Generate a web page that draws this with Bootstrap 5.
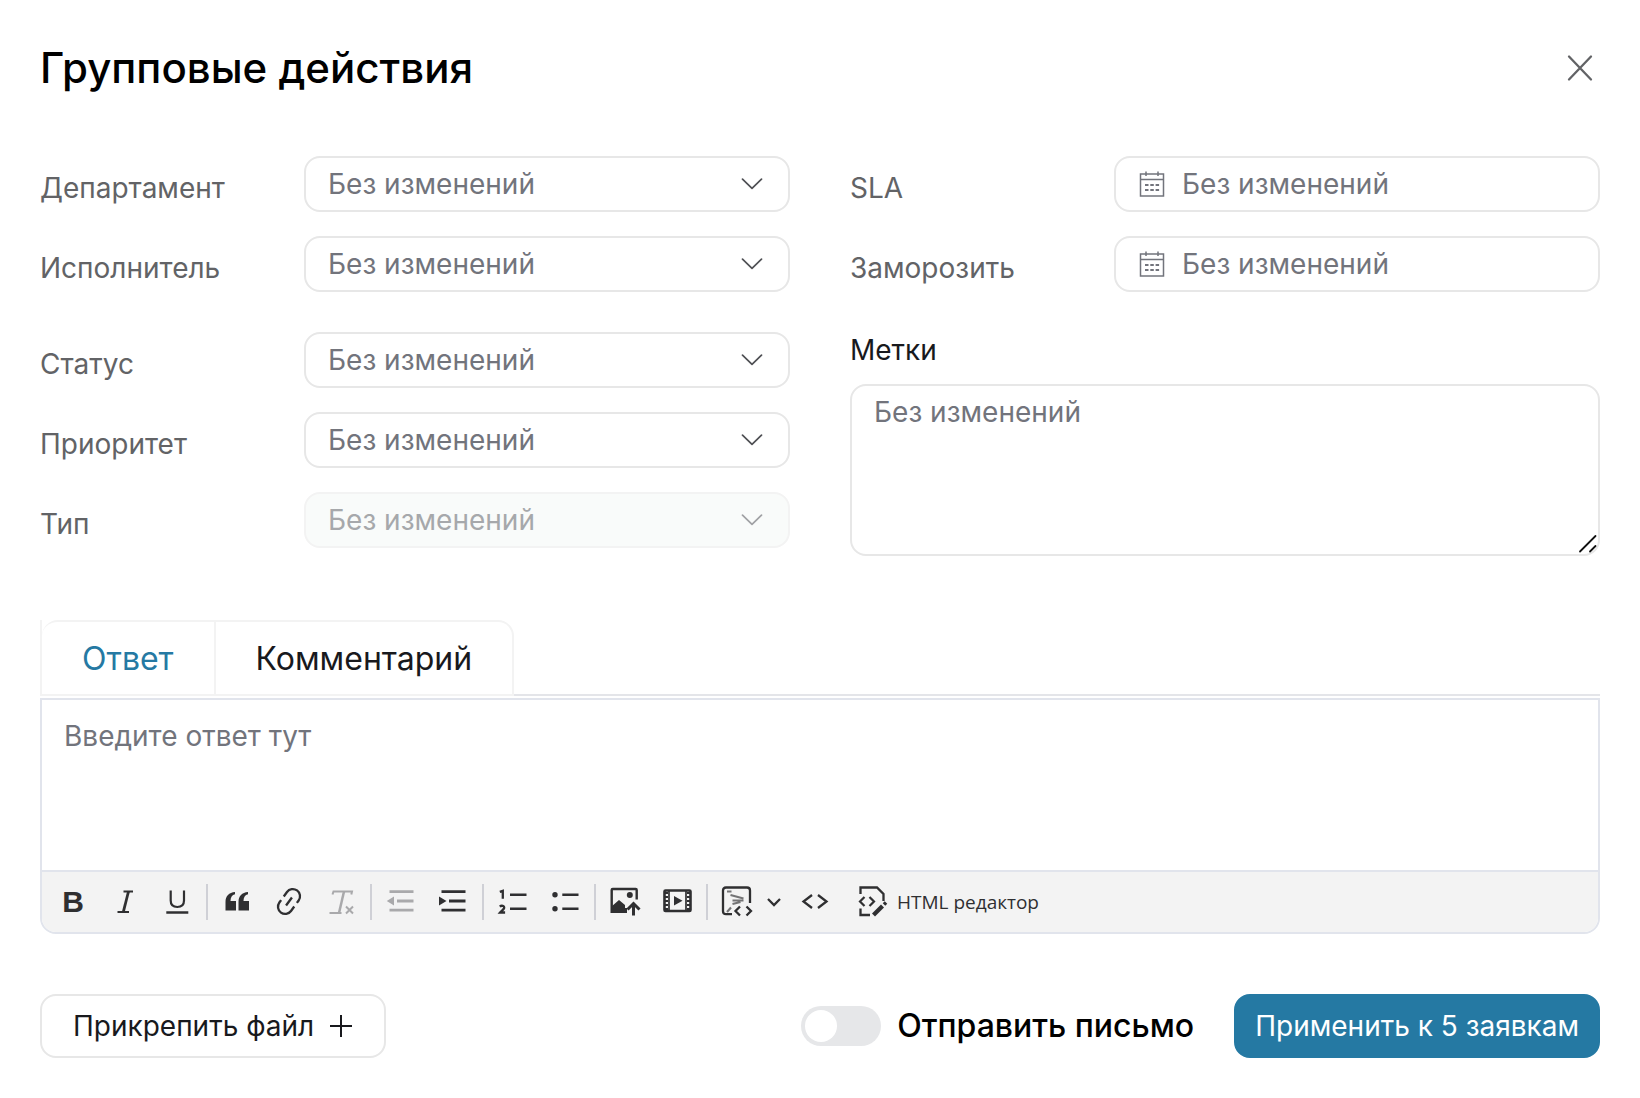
<!DOCTYPE html>
<html lang="ru">
<head>
<meta charset="utf-8">
<meta name="viewport" content="width=device-width, initial-scale=1">
<title>Групповые действия</title>
<link href="https://cdn.jsdelivr.net/npm/bootstrap@5.3.0/dist/css/bootstrap.min.css" rel="stylesheet">
<style>
  :root { --line: #e7e7e7; --line-soft: #f3f3f3; --line-cool: #e1e4ec; --muted: #72747c; --label: #626366; --ink: #18191d; --brand: #2579a3; }
  body { font-family: Inter, "Noto Sans", sans-serif; font-size: 28px; line-height: 36px; color: var(--ink); background: #fff; }
  .dialog-page { padding: 40px; }
  .dialog-head { margin-bottom: 60px; }
  .dialog-title { font-size: 42px; line-height: 56px; font-weight: 500; color: #000; }
  .close-btn { width: 40px; height: 40px; color: var(--label); }
  .fields-row { --bs-gutter-x: 60px; margin-bottom: 64px; }
  .field-stack { display: flex; flex-direction: column; gap: 24px; }
  .field-stack + .field-stack { margin-top: 40px; }
  .field-line { display: flex; align-items: center; }
  .field-line > label { flex: 0 0 264px; padding-top: 8px; color: var(--label); }
  .form-select, .form-control { border: 2px solid var(--line); border-radius: 16px; color: var(--muted); font-size: 28px; line-height: 36px; }
  .form-control::placeholder { color: var(--muted); opacity: 1; }
  .form-select { height: 56px; padding: 0 60px 0 22px; background-size: 22px 12px; background-position: right 25px center;
    background-image: url("data:image/svg+xml,%3Csvg xmlns='http://www.w3.org/2000/svg' viewBox='0 0 22 12'%3E%3Cpath d='M1.5 1.2 11 10.3 20.500 1.200' fill='none' stroke='%23505155' stroke-width='1.700' stroke-linecap='round' stroke-linejoin='round'/%3E%3C/svg%3E"); }
  .form-select:disabled { background-color: #f9fbfa; border-color: var(--line-soft); color: #a6a8ab; opacity: 1;
    background-image: url("data:image/svg+xml,%3Csvg xmlns='http://www.w3.org/2000/svg' viewBox='0 0 22 12'%3E%3Cpath d='M1.5 1.2 11 10.3 20.500 1.200' fill='none' stroke='%23a0a1a4' stroke-width='1.700' stroke-linecap='round' stroke-linejoin='round'/%3E%3C/svg%3E"); }
  .date-field { height: 56px; border: 2px solid var(--line); border-radius: 16px; padding: 0 20px 0 23px; gap: 17px; color: var(--muted); }
  .date-field .form-control { border: 0; padding: 0; border-radius: 0; }
  .tags-label { margin-bottom: 16px; }
  .tags-box { height: 172px; padding: 8px 22px; resize: none; display: block; }
  .grip { right: 2px; bottom: 2px; }
  .tabs-bar { border-bottom: 2px solid #e4e5e9; margin-bottom: 2px; }
  .tabs-set { border-left: 2px solid var(--line-soft); margin-bottom: -2px; }
  .tab-btn { height: 76px; padding: 2px 40px 0; font-size: 32px; background: #fff; color: var(--ink); border: 2px solid var(--line-soft); border-left: 0; }
  .tab-btn.active { color: var(--brand); border-top-left-radius: 16px; }
  .tab-btn:last-child { border-top-right-radius: 16px; }
  .editor { border: 2px solid var(--line-cool); border-radius: 0 0 16px 16px; overflow: hidden; margin-bottom: 60px; }
  .editor-text { height: 170px; padding: 18px 22px; border: 0; border-radius: 0; resize: none; display: block; }
  .editor-bar { height: 62px; padding-left: 5px; background: #f3f3f3; border-top: 2px solid var(--line-cool); color: #2f2f31; }
  .tool { width: 52px; height: 52px; padding: 0; border: 0; background: none; color: inherit; display: flex; align-items: center; justify-content: center; flex: none; }
  .tool:disabled { color: #a9a9ab; }
  .tool svg, .close-btn svg { fill: none; stroke: currentColor; }
  .tool .solid { fill: currentColor; stroke: none; }
  .tool-bold { font-family: "Liberation Sans", sans-serif; font-size: 30px; font-weight: 700; }
  .tool-narrow { width: 22px; margin-right: 4px; }
  .tool-wide { width: auto; margin-left: 16px; gap: 8px; font-family: "Open Sans", "Noto Sans", sans-serif; font-size: 19px; }
  .tool-sep { width: 2px; height: 36px; margin: 0 3px; background: #cfd0d6; flex: none; }
  .btn-attach, .btn-apply { height: 64px; border-radius: 16px; font-size: 28px; line-height: 36px; padding: 0 19px; }
  .btn-attach { border: 2px solid var(--line); color: var(--ink); padding: 0 31px; gap: 15px; }
  .btn-apply { background: var(--brand); border: 2px solid var(--brand); color: #fff; }
  .foot-end { gap: 40px; }
  .mail-switch { gap: 16px; font-size: 32px; font-weight: 500; color: #000; }
  .mail-switch .form-check-input { width: 80px; height: 40px; margin: 0; float: none; border: 0; background-color: #e6e7e9; background-size: 40px 40px;
    background-image: url("data:image/svg+xml,%3Csvg xmlns='http://www.w3.org/2000/svg' viewBox='0 0 40 40'%3E%3Ccircle cx='20' cy='20' r='16' fill='%23fff'/%3E%3C/svg%3E"); }
</style>
<script src="https://cdn.jsdelivr.net/npm/bootstrap@5.3.0/dist/js/bootstrap.bundle.min.js"></script>
</head>
<body>
<svg class="d-none" aria-hidden="true">
  <symbol id="calendar" viewBox="0 0 26 26">
    <path d="M1.500 3h23v22h-23zM1.500 8.500h23M7 .5v4.500M19 .5v4.500" fill="none" stroke="currentColor" stroke-width="1.500"/>
    <path d="M6 14h3.500M11.300 14h3.500M16.600 14h3.500M6 19h3.500M11.300 19h3.500M16.600 19h3.500" fill="none" stroke="currentColor" stroke-width="1.800"/>
  </symbol>
</svg>
<main class="dialog-page container-fluid">
  <header class="dialog-head d-flex justify-content-between align-items-center">
    <h1 class="dialog-title m-0">Групповые действия</h1>
    <button type="button" class="close-btn btn p-0 border-0" aria-label="Закрыть">
      <svg class="d-block" width="40" height="40" viewBox="0 0 40 40"><path d="M9 8.500 31 31.500M31 8.500 9 31.500" stroke-width="2.300" stroke-linecap="round"/></svg>
    </button>
  </header>

  <form>
    <div class="row fields-row">
      <div class="col-6">
        <div class="field-stack">
          <div class="field-line"><label for="dep">Департамент</label><select id="dep" class="form-select"><option>Без изменений</option></select></div>
          <div class="field-line"><label for="exec">Исполнитель</label><select id="exec" class="form-select"><option>Без изменений</option></select></div>
        </div>
        <div class="field-stack">
          <div class="field-line"><label for="status">Статус</label><select id="status" class="form-select"><option>Без изменений</option></select></div>
          <div class="field-line"><label for="prio">Приоритет</label><select id="prio" class="form-select"><option>Без изменений</option></select></div>
          <div class="field-line"><label for="kind">Тип</label><select id="kind" class="form-select" disabled><option>Без изменений</option></select></div>
        </div>
      </div>
      <div class="col-6">
        <div class="field-stack">
          <div class="field-line"><label for="sla">SLA</label>
            <div class="date-field d-flex align-items-center flex-grow-1"><svg class="flex-shrink-0" width="26" height="26"><use href="#calendar"/></svg><input id="sla" type="text" class="form-control" placeholder="Без изменений"></div></div>
          <div class="field-line"><label for="freeze">Заморозить</label>
            <div class="date-field d-flex align-items-center flex-grow-1"><svg class="flex-shrink-0" width="26" height="26"><use href="#calendar"/></svg><input id="freeze" type="text" class="form-control" placeholder="Без изменений"></div></div>
        </div>
        <div class="field-stack d-block">
          <label for="tags" class="tags-label d-block">Метки</label>
          <div class="position-relative">
            <textarea id="tags" class="form-control tags-box" placeholder="Без изменений"></textarea>
            <svg class="grip position-absolute" width="20" height="20" viewBox="0 0 20 20"><path d="M2 17.500 17.500 2M12 17.500l5.500-5.500" fill="none" stroke="#111" stroke-width="1.800" stroke-linecap="round"/></svg>
          </div>
        </div>
      </div>
    </div>

    <div class="tabs-bar d-flex">
      <div class="tabs-set d-flex" role="tablist">
        <button type="button" class="tab-btn active" role="tab" aria-selected="true">Ответ</button>
        <button type="button" class="tab-btn" role="tab" aria-selected="false">Комментарий</button>
      </div>
    </div>

    <div class="editor">
      <textarea class="form-control editor-text" aria-label="Ответ" placeholder="Введите ответ тут"></textarea>
      <div class="editor-bar d-flex align-items-center" role="toolbar" aria-label="Форматирование">
        <button type="button" class="tool tool-bold" aria-label="Жирный">B</button>
        <button type="button" class="tool" aria-label="Курсив"><svg width="32" height="32" viewBox="0 0 32 32"><path d="M14.500 5.500h9.500M8.500 26h11.500" stroke-width="2.200"/><path d="M19.500 5.500 14.300 26" stroke-width="2.800"/></svg></button>
        <button type="button" class="tool" aria-label="Подчёркнутый"><svg width="32" height="32" viewBox="0 0 32 32"><path d="M9.700 4.500v10c0 4.500 2.500 6.500 6.600 6.500s6.700-2 6.700-6.500v-10" stroke-width="2.200"/><path d="M5.300 26.500h22" stroke-width="2.600"/></svg></button>
        <span class="tool-sep"></span>
        <button type="button" class="tool" aria-label="Цитата"><svg width="32" height="32" viewBox="0 0 32 32"><path class="solid" d="M4.500 24.500V16C4.500 10 8 6.500 14 6v2.300c-3 .7-4.500 3-4.500 6.700H15v9.500zM17.500 24.500V16c0-6 3.500-9.500 9.500-10v2.300c-3 .7-4.500 3-4.500 6.700H28v9.500z"/></svg></button>
        <button type="button" class="tool" aria-label="Ссылка"><svg width="32" height="32" viewBox="0 0 32 32"><g transform="rotate(-54 16 15.500)" stroke-width="2.300"><path d="M12.500 8.300H9.500a7.200 7.200 0 0 0 0 14.400h5.500M17 8.300h5.500a7.200 7.200 0 0 1 0 14.400h-3M11 15.500h10"/></g></svg></button>
        <button type="button" class="tool" disabled aria-label="Очистить формат"><svg width="32" height="32" viewBox="0 0 32 32"><path d="M7.500 8.500 8.500 5.500h18.500l-.7 3M4.500 27H16.500" stroke-width="2"/><path d="M19 5.500 14 27" stroke-width="2.500"/><path d="m21 20.500 7 7M28 20.500l-7 7" stroke-width="2"/></svg></button>
        <span class="tool-sep"></span>
        <button type="button" class="tool" disabled aria-label="Уменьшить отступ"><svg width="32" height="32" viewBox="0 0 32 32"><path d="M4.500 5.700h24M12 15h16.500M4.500 24.200h24" stroke-width="2.800"/><path class="solid" d="M9 10.500v9L1.800 15z"/></svg></button>
        <button type="button" class="tool" aria-label="Увеличить отступ"><svg width="32" height="32" viewBox="0 0 32 32"><path d="M4.500 5.700h24M12 15h16.500M4.500 24.200h24" stroke-width="2.800"/><path class="solid" d="M2 10.500v9L9.500 15z"/></svg></button>
        <span class="tool-sep"></span>
        <button type="button" class="tool" aria-label="Нумерованный список"><svg width="32" height="32" viewBox="0 0 32 32"><path d="M13 8.700h16.500M13 22.700h16.500" stroke-width="2.400"/><path d="M2.800 5.800 5.800 4.800v8M2.800 20.600c1.500-1.400 5-1 4.300 1.500-.4 1.500-2.600 2.800-4 4.400h5" stroke-width="2.300"/></svg></button>
        <button type="button" class="tool" aria-label="Маркированный список"><svg width="32" height="32" viewBox="0 0 32 32"><path d="M13.300 8.700h16.200M13.300 22.700h16.200" stroke-width="2.400"/><circle class="solid" cx="6" cy="8.700" r="2.700"/><circle class="solid" cx="6" cy="22.700" r="2.700"/></svg></button>
        <span class="tool-sep"></span>
        <button type="button" class="tool" aria-label="Загрузить изображение"><svg width="32" height="32" viewBox="0 0 32 32"><path d="M17 25.800H2.700V4q0-1 1-1h23q1 0 1 1v9.500" stroke-width="2.400"/><path class="solid" d="M2.500 27v-6.500l7.500-6.500 6 5v3h2v5z"/><circle class="solid" cx="20.800" cy="9" r="3"/><path d="M24.500 29.500V17.500M18.500 23.500l6-6 6 6" stroke-width="3"/></svg></button>
        <button type="button" class="tool" aria-label="Вставить видео"><svg width="32" height="32" viewBox="0 0 32 32"><rect x="3.500" y="4.500" width="26" height="20.500" rx="1" stroke-width="2.600"/><path d="M8 4.500V25M25 4.500V25" stroke-width="1.700"/><path d="M5.500 6V24M27.500 6V24" stroke-width="3" stroke-dasharray="2 2"/><path class="solid" d="M13 10v9.500l8.500-4.700z"/></svg></button>
        <span class="tool-sep"></span>
        <button type="button" class="tool" aria-label="Шаблоны"><svg width="32" height="32" viewBox="0 0 32 32"><path d="M11 28.200H5q-3 0-3-3V4.500q0-3 3-3h21q3 0 3 3V17" stroke-width="2.300"/><path d="M6 5.500h4.500M9.500 9l13 3.500M11.500 14.500h11M11.500 18l8-2M6 26l4-4.500" stroke-width="2.100" opacity=".65"/><path d="m19 20.500-4.500 4.500 4.500 4.500M25.500 20.500l4.500 4.500-4.500 4.500" stroke-width="2.300"/></svg></button>
        <button type="button" class="tool tool-narrow" aria-label="Список шаблонов"><svg width="16" height="16" viewBox="0 0 16 16"><path d="m2 5 6 6 6-6" stroke-width="2.300"/></svg></button>
        <button type="button" class="tool" aria-label="Исходный код"><svg width="32" height="32" viewBox="0 0 32 32"><path d="m13 9-8.500 6.500L13 22M19 9l8.500 6.500L19 22" stroke-width="2.300"/></svg></button>
        <button type="button" class="tool tool-wide"><svg width="32" height="32" viewBox="0 0 32 32"><path d="M3.500 8V1.500H20l6.500 6.500v7M3.500 22.500V29H13" stroke-width="2.300"/><path d="M7.500 11 3 15.500 7.500 20M12.500 11l4.500 4.500-4.500 4.500" stroke-width="2.200"/><path d="m16.500 29 9-9" stroke-width="4.200"/><path d="m27 18.500 2-2" stroke-width="3.500"/></svg>HTML редактор</button>
      </div>
    </div>

    <footer class="d-flex align-items-center justify-content-between">
      <button type="button" class="btn btn-attach d-flex align-items-center">Прикрепить файл
        <svg width="24" height="24" viewBox="0 0 24 24"><path d="M12 1v22M1 12h22" fill="none" stroke="currentColor" stroke-width="2"/></svg></button>
      <div class="foot-end d-flex align-items-center">
        <div class="mail-switch form-switch d-flex align-items-center p-0">
          <input class="form-check-input" type="checkbox" role="switch" id="mail"><label for="mail">Отправить письмо</label>
        </div>
        <button type="submit" class="btn btn-apply">Применить к 5 заявкам</button>
      </div>
    </footer>
  </form>
</main>
</body>
</html>
